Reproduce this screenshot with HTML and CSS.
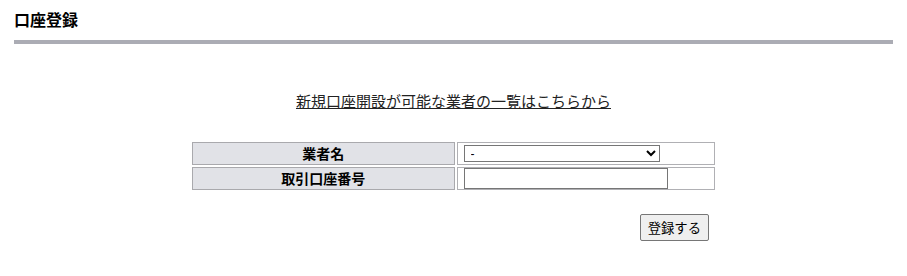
FILE: index.html
```html
<!DOCTYPE html>
<html>
<head>
    <title>口座登録</title>
    <meta charset="utf-8">
    <link rel="stylesheet" href="styles.css">
</head>
<body>
    <div class="page">
        <h1 class="title">口座登録</h1>

        <p class="lead"><a href="#">新規口座開設が可能な業者の一覧はこちらから</a></p>

        <form class="entry-form" onsubmit="return false;">
            <table class="entry">
                <tr>
                    <th>業者名</th>
                    <td>
                        <select name="company" class="field-select">
                            <option value="">-</option>
                        </select>
                    </td>
                </tr>
                <tr>
                    <th>取引口座番号</th>
                    <td><input type="text" name="account" class="field-text"></td>
                </tr>
            </table>

            <div class="actions">
                <button type="submit" class="btn">登録する</button>
            </div>
        </form>
    </div>
</body>
</html>
```

FILE: styles.css
```css
body {
    margin: 0;
    font-family: "Noto Sans CJK JP", "Liberation Sans", sans-serif;
    color: #000;
}
.page {
    padding: 0 14px;
}
.title {
    margin: 0;
    padding: 9px 0 10px;
    font-size: 16px;
    line-height: 21px;
    font-weight: bold;
    border-bottom: 4px solid #abacb4;
}
.lead {
    margin: 47px 0 0;
    text-align: center;
    font-size: 15px;
    line-height: 20px;
}
.lead a {
    color: #222;
    text-decoration: underline;
}
.entry {
    width: 527px;
    margin: 29px auto 0;
    border-spacing: 2px;
    table-layout: fixed;
}
.entry th {
    width: 50%;
    height: 21px;
    padding: 0;
    background-color: #e1e2e7;
    border: 1px solid #a9a9ad;
    font-size: 14px;
    line-height: 21px;
    font-weight: bold;
    text-align: center;
}
.entry td {
    padding: 0 6px;
    border: 1px solid #b0b0b4;
    vertical-align: middle;
}
.field-select {
    display: block;
    width: 196px;
    height: 17px;
    padding: 0 2px;
    font-size: 12px;
    font-family: "Liberation Sans", sans-serif;
    border: 1px solid #767676;
    border-radius: 0;
    background: #fff;
}
.field-text {
    display: block;
    box-sizing: border-box;
    width: 204px;
    height: 21px;
    margin: 0;
    border: 1px solid #767676;
}
.actions {
    width: 527px;
    margin: 22px auto 0;
    padding-right: 8px;
    box-sizing: border-box;
    text-align: right;
}
.btn {
    height: 27px;
    padding: 0 7px;
    font-family: "Noto Sans CJK JP", sans-serif;
    font-size: 13.33px;
    background-color: #efefef;
    border: 1px solid #767676;
    border-radius: 2px;
    cursor: pointer;
}
```
